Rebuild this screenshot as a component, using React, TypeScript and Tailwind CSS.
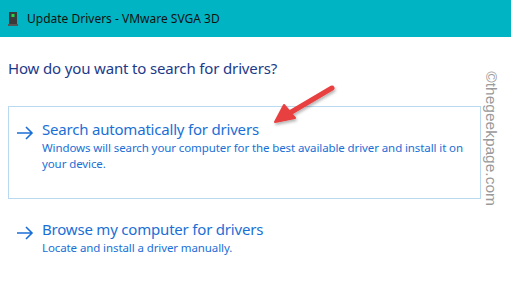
import React from "react";

function DeviceIcon() {
  return (
    <svg width="10" height="14" viewBox="0 0 10 14" className="shrink-0">
      <rect x="1" y="0" width="8" height="12" fill="#3a3a3a" />
      <rect x="3.5" y="2" width="3" height="3" fill="#22d84a" />
      <rect x="0" y="12" width="10" height="2" fill="#555" />
    </svg>
  );
}

function Arrow() {
  return (
    <svg width="18" height="14" viewBox="0 0 18 14" className="shrink-0">
      <path d="M1 7h15M10 1l6 6-6 6" fill="none" stroke="#1a6fd6" strokeWidth="1.6" />
    </svg>
  );
}

function Option({ title, desc }: { title: string; desc: React.ReactNode }) {
  return (
    <div className="flex items-start gap-[8px]">
      <div className="pt-[7px]">
        <Arrow />
      </div>
      <div>
        <div className="text-[15px] leading-[21px] tracking-[-0.2px] text-[#1a6fd6]">{title}</div>
        <div className="text-[11.5px] leading-[16px] tracking-[-0.1px] text-[#1a6fd6] whitespace-nowrap">{desc}</div>
      </div>
    </div>
  );
}

export default function App() {
  return (
    <div
      className="relative w-[511px] h-[290px] bg-white overflow-hidden"
      style={{ fontFamily: '"Noto Sans", "Open Sans", sans-serif' }}
    >
      <div className="h-[37px] bg-[#00b4c3] flex items-center gap-[9px] pl-[8px]">
        <DeviceIcon />
        <span className="text-[12px] text-[#111]">Update Drivers - VMware SVGA 3D</span>
      </div>

      <div className="px-[8px]">
        <div className="mt-[20px] text-[15px] leading-[22px] tracking-[-0.15px] text-[#1c3a8a]">
          How do you want to search for drivers?
        </div>

        <div className="mt-[27px] w-[473px] h-[93px] border border-[#b9d9f1] pl-[7px] pt-[12px]">
          <Option
            title="Search automatically for drivers"
            desc={
              <>
                Windows will search your computer for the best available driver and install it on
                <br />
                your device.
              </>
            }
          />
        </div>

        <div className="mt-[20px] pl-[8px]">
          <Option title="Browse my computer for drivers" desc="Locate and install a driver manually." />
        </div>
      </div>

      <div className="absolute left-[484px] top-[70px] w-[14px] h-[138px] flex items-center justify-center">
        <span
          className="block whitespace-nowrap text-[15.5px] text-[#9a9a9a] rotate-90"
          style={{ fontFamily: '"Liberation Sans", sans-serif' }}
        >
          ©thegeekpage.com
        </span>
      </div>

      <svg className="absolute left-[266px] top-[80px]" width="80" height="55" viewBox="0 0 80 55">
        <defs>
          <filter id="sh" x="-20%" y="-20%" width="140%" height="140%">
            <feDropShadow dx="1" dy="2" stdDeviation="1.5" floodColor="#000" floodOpacity="0.3" />
          </filter>
        </defs>
        <g filter="url(#sh)">
          <path d="M66 8L22 34" stroke="#e8403f" strokeWidth="5" strokeLinecap="round" />
          <path d="M9 42L18 25L29 38Z" fill="#e8403f" stroke="#e8403f" strokeWidth="2" strokeLinejoin="round" />
        </g>
      </svg>
    </div>
  );
}
